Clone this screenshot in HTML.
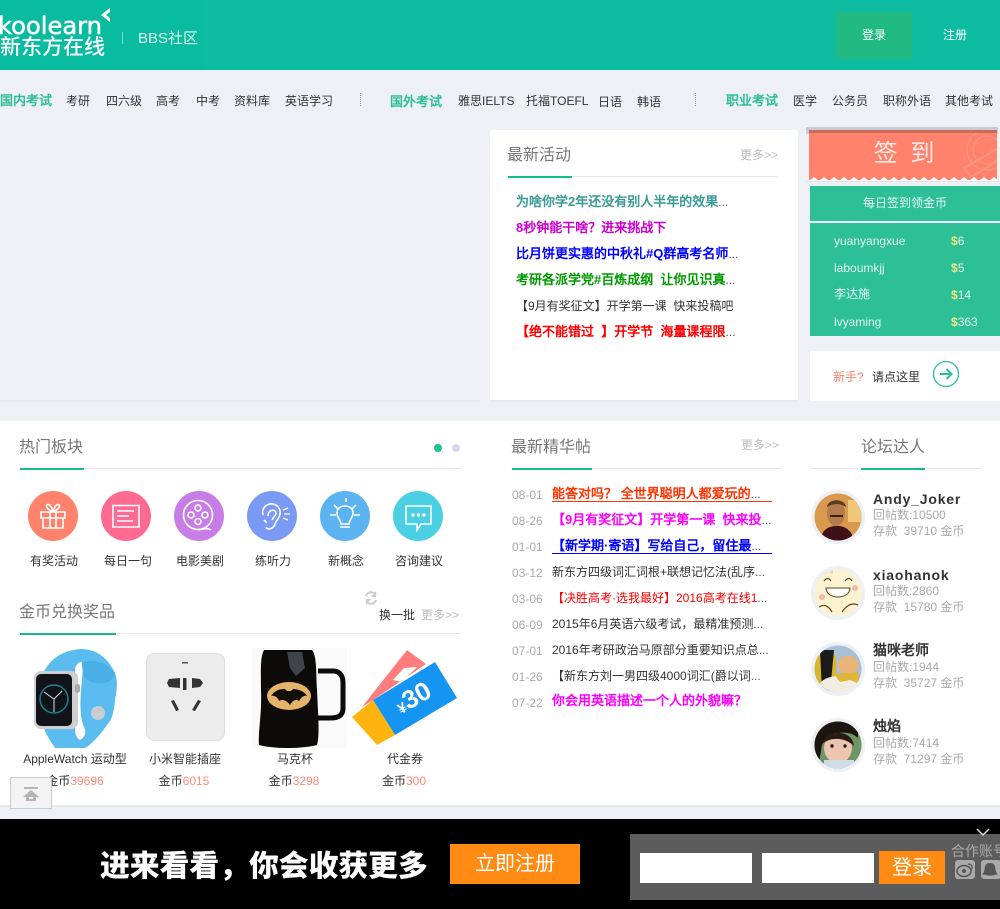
<!DOCTYPE html>
<html><head><meta charset="utf-8"><title>BBS社区</title>
<style>
html,body{margin:0;padding:0}
body{width:1000px;height:909px;overflow:hidden;position:relative;background:#edf0f5;font:12px/20px Arial,"Liberation Sans",sans-serif;color:#333}
.b{position:absolute}
.t{position:absolute;white-space:nowrap;line-height:20px}
.c{text-align:center}
.nh{font-size:13px;font-weight:bold;color:#2dbf96}
.h{font-size:16px;color:#777}
.m{color:#bbb}
.a{font-size:13px;font-weight:bold}
.d{color:#aaa}
.g{color:#aaa}
.n{font-size:14px;font-weight:bold;letter-spacing:.8px;color:#333}
.o{color:#ff8a78}
svg{position:absolute;left:0;top:0}
</style></head><body>
<div class="b" style="left:0;top:0;width:1000px;height:70px;background:#0dbca1"></div>
<div class="b" style="left:0;top:0;width:204px;height:70px;background:#0abc9f"></div>
<div class="t" style="left:-2px;top:12px;font-family:'DejaVu Sans',sans-serif;font-size:24.200px;line-height:28px;color:#fff;-webkit-text-stroke:.5px #fff">koolearn</div>
<div class="t" style="left:0;top:36px;font-size:21px;line-height:21px;color:#fff;font-weight:500;font-family:'Noto Sans CJK SC',sans-serif">新东方在线</div>
<div class="b" style="left:122px;top:32px;width:1px;height:12px;background:#7fdccb"></div>
<div class="t" style="left:138px;top:29px;font-size:15px;color:#d8f5ee">BBS社区</div>
<div class="b" style="left:836px;top:12px;width:76px;height:47px;background:#20ba82"></div>
<div class="t c" style="left:836px;top:25px;width:76px;color:#fff">登录</div>
<div class="t" style="left:943px;top:25px;color:#fff">注册</div>

<div class="t nh" style="left:0;top:91px">国内考试</div>
<div class="t" style="left:66px;top:91px">考研</div>
<div class="t" style="left:106px;top:91px">四六级</div>
<div class="t" style="left:156px;top:91px">高考</div>
<div class="t" style="left:196px;top:91px">中考</div>
<div class="t" style="left:234px;top:91px">资料库</div>
<div class="t" style="left:285px;top:91px">英语学习</div>
<div class="b" style="left:360px;top:93px;height:13px;border-left:1px dotted #999"></div>
<div class="t nh" style="left:390px;top:92px">国外考试</div>
<div class="t" style="left:458px;top:91px">雅思IELTS</div>
<div class="t" style="left:526px;top:91px">托福TOEFL</div>
<div class="t" style="left:598px;top:92px">日语</div>
<div class="t" style="left:637px;top:92px">韩语</div>
<div class="b" style="left:695px;top:93px;height:13px;border-left:1px dotted #999"></div>
<div class="t nh" style="left:726px;top:91px">职业考试</div>
<div class="t" style="left:793px;top:91px">医学</div>
<div class="t" style="left:832px;top:91px">公务员</div>
<div class="t" style="left:883px;top:91px">职称外语</div>
<div class="t" style="left:945px;top:91px">其他考试</div>

<div class="b" style="left:0;top:400px;width:480px;height:2px;background:#e6e9ee"></div>
<div class="b" style="left:490px;top:130px;width:308px;height:270px;background:#fff;border-bottom:2px solid #e6e9ee"></div>
<div class="t h" style="left:507px;top:146px">最新活动</div>
<div class="b" style="left:508px;top:176px;width:270px;height:1px;background:#e8e8e8"></div>
<div class="b" style="left:508px;top:176px;width:64px;height:2px;background:#14bd8c"></div>
<div class="t m" style="left:740px;top:145px">更多&gt;&gt;</div>
<div class="t a" style="left:516px;top:192px;color:#3a9a96">为啥你学2年还没有别人半年的效果<span style="font-weight:normal;color:#555;font-size:12px">...</span></div>
<div class="t a" style="left:516px;top:218px;color:#c0c">8秒钟能干啥？进来挑战下</div>
<div class="t a" style="left:516px;top:244px;color:#00f">比月饼更实惠的中秋礼#Q群高考名师<span style="font-weight:normal;color:#555;font-size:12px">...</span></div>
<div class="t a" style="left:516px;top:270px;color:#090">考研各派学党#百炼成纲&nbsp; 让你见识真<span style="font-weight:normal;color:#555;font-size:12px">...</span></div>
<div class="t" style="left:516px;top:296px;font-size:12px;color:#333">【9月有奖征文】开学第一课&nbsp; 快来投稿吧</div>
<div class="t a" style="left:516px;top:322px;color:#f00">【绝不能错过&nbsp; 】开学节&nbsp; 海量课程限<span style="font-weight:normal;color:#555;font-size:12px">...</span></div>

<svg width="1000" height="909" viewBox="0 0 1000 909" style="z-index:0">
<defs><pattern id="zz" x="809" y="176" width="10" height="5" patternUnits="userSpaceOnUse"><path d="M0 5L5 1L10 5Z" fill="#fff"/></pattern>
<clipPath id="sc"><rect x="809" y="133" width="188" height="44"/></clipPath></defs>
<rect x="806" y="127" width="192" height="7" rx="1" fill="#c5cbd6"/>
<rect x="809" y="130" width="188" height="50" fill="#ff826c"/>
<rect x="809" y="130" width="188" height="3" fill="#cc6b5c"/>
<rect x="809" y="176" width="188" height="5" fill="url(#zz)"/>
<rect x="806" y="181" width="192" height="1" fill="#e2e5ea"/>
<g clip-path="url(#sc)" fill="none" stroke="#ff927e" stroke-width="1.500"><circle cx="987" cy="150" r="20"/><circle cx="987" cy="150" r="14"/><path d="M964 168l33-19 2 11-28 17z" stroke-width="2"/></g>
</svg>
<div class="t c" style="left:809px;top:142px;width:190px;font-size:24px;line-height:20px;color:#ffe9e4;word-spacing:6px"><span style="position:relative;top:2px">签 到</span></div>
<div class="b" style="left:810px;top:186px;width:190px;height:35px;background:#2dbf96"></div>
<div class="t c" style="left:810px;top:193px;width:190px;color:#e6f8f2">每日签到领金币</div>
<div class="b" style="left:810px;top:223px;width:190px;height:113px;background:#2dbf96"></div>
<div class="t" style="left:834px;top:231px;color:#e0f5ee">yuanyangxue</div>
<div class="t" style="left:951px;top:231px;color:#e0f5ee"><span style="color:#f5e97f;font-weight:bold">$</span>6</div>
<div class="t" style="left:834px;top:258px;color:#e0f5ee">laboumkjj</div>
<div class="t" style="left:951px;top:258px;color:#e0f5ee"><span style="color:#f5e97f;font-weight:bold">$</span>5</div>
<div class="t" style="left:834px;top:284px;color:#e0f5ee">李达施</div>
<div class="t" style="left:951px;top:285px;color:#e0f5ee"><span style="color:#f5e97f;font-weight:bold">$</span>14</div>
<div class="t" style="left:834px;top:312px;color:#e0f5ee">lvyaming</div>
<div class="t" style="left:951px;top:312px;color:#e0f5ee"><span style="color:#f5e97f;font-weight:bold">$</span>363</div>
<div class="b" style="left:810px;top:351px;width:190px;height:50px;background:#fff"></div>
<div class="t o" style="left:833px;top:367px;color:#ff826c">新手?</div>
<div class="t" style="left:872px;top:367px">请点这里</div>

<div class="b" style="left:0;top:421px;width:1000px;height:384px;background:#fff;border-bottom:2px solid #e6e9ee"></div>

<div class="t h" style="left:19px;top:438px">热门板块</div>
<div class="b" style="left:20px;top:468px;width:440px;height:1px;background:#e8e8e8"></div>
<div class="b" style="left:20px;top:468px;width:64px;height:2px;background:#14bd8c"></div>
<div class="b" style="left:434px;top:444px;width:8px;height:8px;border-radius:50%;background:#1fc18f"></div>
<div class="b" style="left:452px;top:444px;width:8px;height:8px;border-radius:50%;background:#d5d9e3"></div>

<div class="t c" style="left:14px;top:551px;width:80px">有奖活动</div>
<div class="t c" style="left:88px;top:551px;width:80px">每日一句</div>
<div class="t c" style="left:160px;top:551px;width:80px">电影美剧</div>
<div class="t c" style="left:233px;top:551px;width:80px">练听力</div>
<div class="t c" style="left:306px;top:551px;width:80px">新概念</div>
<div class="t c" style="left:379px;top:551px;width:80px">咨询建议</div>

<div class="t h" style="left:19px;top:603px">金币兑换奖品</div>
<div class="b" style="left:20px;top:633px;width:440px;height:1px;background:#e8e8e8"></div>
<div class="b" style="left:20px;top:633px;width:96px;height:2px;background:#14bd8c"></div>
<div class="t" style="left:379px;top:605px">换一批</div>
<div class="t m" style="left:421px;top:605px">更多&gt;&gt;</div>

<div class="t c" style="left:15px;top:749px;width:120px">AppleWatch 运动型</div>
<div class="t c" style="left:125px;top:749px;width:120px">小米智能插座</div>
<div class="t c" style="left:235px;top:749px;width:120px">马克杯</div>
<div class="t c" style="left:345px;top:749px;width:120px">代金券</div>
<div class="t c" style="left:15px;top:771px;width:120px">金币<span class="o">39696</span></div>
<div class="t c" style="left:124px;top:771px;width:120px">金币<span class="o">6015</span></div>
<div class="t c" style="left:234px;top:771px;width:120px">金币<span class="o">3298</span></div>
<div class="t c" style="left:344px;top:771px;width:120px">金币<span class="o">300</span></div>

<svg width="1000" height="909" viewBox="0 0 1000 909">
<!-- arrow circle -->
<circle cx="946" cy="374" r="12.500" fill="none" stroke="#2dbf96" stroke-width="1.300"/>
<path d="M940 374H951M946.500 369L951.500 374L946.500 379" fill="none" stroke="#2dbf96" stroke-width="2"/>
<!-- category circles -->
<circle cx="53" cy="516" r="25" fill="#ff826c"/><circle cx="126" cy="516" r="25" fill="#ff6a92"/><circle cx="199" cy="516" r="25" fill="#c87de6"/><circle cx="272" cy="516" r="25" fill="#7a9af5"/><circle cx="345" cy="516" r="25" fill="#5cb3f2"/><circle cx="418" cy="516" r="25" fill="#4bcfe2"/>
<g fill="none" stroke="#fff" stroke-width="1.600">
<path d="M41 512H65V518H41ZM43 518V528H63V518M50 512V528M56 512V528"/>
<path d="M53 512C49 510 45 507 47 505C49 503 52 507 53 512C54 507 57 503 59 505C61 507 57 510 53 512"/>
<path d="M113 505.500H139V527H113ZM117 511H134M117 516H129M117 521H133"/>
<circle cx="198" cy="515" r="14.500"/><circle cx="198" cy="508" r="3"/><circle cx="198" cy="521.500" r="3"/><circle cx="191" cy="515" r="3"/><circle cx="205" cy="515" r="3"/>
<path d="M198 529.500C202 530 207 527 211 530"/>
<path d="M266 527C268 531 274 528 275 524C277 519 281 517 280 511C279 505 272 502 267 505C263 507 262 512 263 515M268 516C268 510 275 508 276 513C276 516 273 517 272 520M264 520L267 523"/>
<path d="M283 510L288 508M284 514H290M283 518L288 520" stroke-width="1.300"/>
<path d="M340 527H350M341 524C341 520 337 518 337 513C337 508 341 506 345 506C349 506 353 508 353 513C353 518 349 520 349 524ZM330 515H336M354 515H360M334 505L338 509M356 505L352 509M346 502V498"/>
<path d="M406 506H431V524H421L417 530V524H406Z"/>
</g>
<g fill="#fff"><circle cx="413" cy="515" r="1.700"/><circle cx="418.500" cy="515" r="1.700"/><circle cx="424" cy="515" r="1.700"/></g>
<!-- refresh -->
<path d="M366 596A5.500 5.500 0 0 1 376 595M376 600A5.500 5.500 0 0 1 366 601" fill="none" stroke="#ccc" stroke-width="2"/><path d="M376 591V597H371ZM366 605V599H371Z" fill="#ccc"/>
<!-- watch -->
<path d="M43 673C50 660 60 651 80 649C97 649 108 658 115 673C118 680 117 690 115 700C114 712 112 720 107 725C100 735 92 744 85 748H55C50 740 46 735 44 728Z" fill="#5bbcf0"/>
<path d="M75 668C79 660 83 660 83 668L81 690C80 705 80 718 84 727C87 733 84 738 80 740C76 738 75 733 75 728Z" fill="#fff"/>
<path d="M82 663C95 658 108 663 115 674C112 682 105 685 92 682C84 680 82 672 82 663Z" fill="#49aee6"/>
<circle cx="98" cy="713" r="7" fill="#c9ccd0"/>
<rect x="34" y="671" width="44" height="58" rx="7" fill="#cfcfcf"/>
<rect x="36" y="674" width="36" height="52" rx="5" fill="#101418"/>
<circle cx="54" cy="699" r="14" fill="none" stroke="#1d7f96" stroke-width="1.500"/>
<path d="M54 699L44 692M54 699L62 691M54 699V712" stroke="#ddd" stroke-width="1"/>
<rect x="75" y="684" width="5" height="9" rx="2.500" fill="#aaa"/>
<!-- socket -->
<rect x="146.500" y="653.500" width="78" height="87" rx="8" fill="#ececec" stroke="#dedede"/>
<rect x="182" y="662" width="6" height="1.500" fill="#555"/>
<g fill="#333"><path d="M169 679L180 678V688L169 687L167 683Z"/><path d="M192 678L200 679L203 683L200 687L192 688Z"/><rect x="183" y="678" width="3.500" height="12"/><path d="M171 701L174 700L179 710L176 711ZM198 700L201 701L195 711L192 710Z"/></g>
<!-- mug -->
<rect x="252" y="648" width="95" height="100" fill="#fafafa"/>
<path d="M264 650H312C317 655 316 675 317 690C318 715 320 735 317 745C300 749 275 749 259 745C258 730 262 715 261 690C261 670 260 658 264 650Z" fill="#0d0b0a"/>
<path d="M318 671H333C340 671 343 676 343 683V708C343 716 338 718 330 718H318" fill="none" stroke="#0d0b0a" stroke-width="5"/>
<ellipse cx="289" cy="696" rx="22" ry="14" fill="#e5b36c"/>
<path d="M271 696C275 690 280 689 285 689L287 691H291L293 689C298 689 304 691 307 696C303 695 301 698 299 701C296 699 293 700 290 705C286 700 283 699 279 701C278 698 275 695 271 696Z" fill="#120e0a"/>
<path d="M287 652H302L305 668L296 676L290 668Z" fill="#4c525b" opacity=".8"/>
<!-- coupon -->
<path d="M362 707L407 650L426 664L373 700Z" fill="#ff7d7d"/>
<path d="M393 680L404 668L417 667L402 682Z" fill="#fff"/>
<path d="M373 700L435 662L457 698L395 735Z" fill="#1594f2"/>
<path d="M352 717L373 700L395 735L377 745Z" fill="#ffb30f"/>
<!-- avatars -->
<defs>
<clipPath id="c1"><circle cx="838" cy="517" r="23.500"/></clipPath>
<clipPath id="c2"><circle cx="838" cy="593" r="23.500"/></clipPath>
<clipPath id="c3"><circle cx="838" cy="669" r="23.500"/></clipPath>
<clipPath id="c4"><circle cx="838" cy="745" r="23.500"/></clipPath>
</defs>
<circle cx="838" cy="517" r="27" fill="#edf0f5"/><circle cx="838" cy="593" r="27" fill="#edf0f5"/><circle cx="838" cy="669" r="27" fill="#edf0f5"/><circle cx="838" cy="745" r="27" fill="#edf0f5"/>
<g clip-path="url(#c1)"><rect x="814" y="493" width="48" height="48" fill="#d99a4e"/><rect x="848" y="500" width="14" height="22" fill="#f0c67b"/><path d="M820 541C822 527 832 526 837 526C845 526 852 530 854 541Z" fill="#3e1118"/><ellipse cx="836" cy="513" rx="9" ry="13" fill="#b57a4e"/><path d="M827 507C828 498 845 498 846 507C840 503 833 503 827 507Z" fill="#5a3a22"/><path d="M830 516H843" stroke="#3a2515" stroke-width="2"/></g>
<g clip-path="url(#c2)"><rect x="814" y="569" width="48" height="48" fill="#fdf3d0"/><path d="M826 588H850C850 600 826 600 826 588Z" fill="#fff" stroke="#5b4420"/><path d="M824 581Q828 576 831 581M845 581Q849 576 852 581" fill="none" stroke="#5b4420" stroke-width="1.200"/><circle cx="822" cy="597" r="3" fill="#f7b7b0"/><circle cx="855" cy="588" r="3" fill="#f7b7b0"/><path d="M818 572H834" stroke="#d5d5d5" stroke-width="3" stroke-dasharray="3 3"/><path d="M816 610Q825 600 832 612M842 612Q850 600 860 606" fill="none" stroke="#5b4420" stroke-width="1.200"/></g>
<g clip-path="url(#c3)"><rect x="814" y="645" width="48" height="48" fill="#a7c0d8"/><rect x="814" y="655" width="22" height="30" fill="#d9b62e"/><path d="M820 650H834L830 692H822Z" fill="#1a1a1a"/><ellipse cx="840" cy="685" rx="20" ry="9" fill="#f3ece3"/><ellipse cx="848" cy="665" rx="11" ry="9" fill="#eab47d"/><path d="M834 674L858 672L860 684L850 680L840 682Z" fill="#e0b53a"/></g>
<g clip-path="url(#c4)"><rect x="814" y="721" width="48" height="48" fill="#6e9565"/><path d="M814 721H858V738C850 730 830 730 822 745L818 769H814Z" fill="#1f1510"/><ellipse cx="838" cy="748" rx="14" ry="15" fill="#ecc4b0"/><path d="M822 744C826 730 852 728 854 746C846 738 832 736 822 744Z" fill="#2a1a14"/><rect x="824" y="760" width="30" height="10" fill="#d0dde6"/><circle cx="832" cy="746" r="1.700" fill="#222"/><circle cx="845" cy="746" r="1.700" fill="#222"/></g>
<!-- bottom bar -->
<rect x="0" y="819" width="1000" height="90" fill="#000"/>
<rect x="630" y="834" width="370" height="66" fill="#5c5c5c"/>
<rect x="640" y="853" width="112" height="30" fill="#fff"/><rect x="762" y="853" width="112" height="30" fill="#fff"/>
<path d="M977 829L983 835L989 829" fill="none" stroke="#ddd" stroke-width="1.500"/>
<rect x="955" y="860" width="20" height="19" rx="3" fill="#aaa"/><rect x="981" y="860" width="20" height="19" rx="3" fill="#aaa"/>
<ellipse cx="964" cy="871" rx="7" ry="5.500" fill="none" stroke="#555" stroke-width="1.500"/><circle cx="964" cy="871" r="2" fill="#555"/><path d="M968 864Q973 864 972 869" fill="none" stroke="#555" stroke-width="1.200"/>
<path d="M990 863C985 863 984.500 867 984.500 870L982.500 875L985 874.500C986 876 994 876 995 874.500L997.500 875L995.500 870C995.500 867 995 863 990 863Z" fill="#555"/>
</svg>
<svg width="1000" height="909" viewBox="0 0 1000 909" style="z-index:1"><path d="M110 8L101 15L110 22V18L106 15L110 12Z" fill="#fff"/></svg>
<div class="t" style="left:386px;top:687px;width:56px;text-align:center;font-size:26px;font-weight:bold;color:#fff;transform:rotate(-30deg);z-index:2"><span style="font-size:15px">¥</span>30</div>

<div class="t h" style="left:511px;top:438px">最新精华帖</div>
<div class="b" style="left:512px;top:468px;width:268px;height:1px;background:#e8e8e8"></div>
<div class="b" style="left:512px;top:468px;width:80px;height:2px;background:#14bd8c"></div>
<div class="t m" style="left:741px;top:435px">更多&gt;&gt;</div>
<div class="t d" style="left:512px;top:485px">08-01</div><div class="t a" style="left:552px;top:484px;width:220px;height:17px;line-height:19px;color:#f30;border-bottom:1px solid #f30">能答对吗？ 全世界聪明人都爱玩的<span style="font-weight:normal;color:#555;font-size:12px">...</span></div>
<div class="t d" style="left:512px;top:511px">08-26</div><div class="t a" style="left:552px;top:510px;color:#f0f">【9月有奖征文】开学第一课&nbsp; 快来投<span style="font-weight:normal;color:#555;font-size:12px">...</span></div>
<div class="t d" style="left:512px;top:537px">01-01</div><div class="t a" style="left:552px;top:536px;width:220px;height:17px;line-height:19px;color:#00f;border-bottom:1px solid #00f">【新学期·寄语】写给自己，留住最<span style="font-weight:normal;color:#555;font-size:12px">...</span></div>
<div class="t d" style="left:512px;top:563px">03-12</div><div class="t" style="left:552px;top:562px;color:#333">新东方四级词汇词根+联想记忆法(乱序<span style="color:#555">...</span></div>
<div class="t d" style="left:512px;top:589px">03-06</div><div class="t" style="left:552px;top:588px;color:#f00">【决胜高考·选我最好】2016高考在线1<span style="color:#555">...</span></div>
<div class="t d" style="left:512px;top:615px">06-09</div><div class="t" style="left:552px;top:614px;color:#333">2015年6月英语六级考试，最精准预测<span style="color:#555">...</span></div>
<div class="t d" style="left:512px;top:641px">07-01</div><div class="t" style="left:552px;top:640px;color:#333">2016年考研政治马原部分重要知识点总<span style="color:#555">...</span></div>
<div class="t d" style="left:512px;top:667px">01-26</div><div class="t" style="left:552px;top:666px;color:#333">【新东方刘一男四级4000词汇(爵以词<span style="color:#555">...</span></div>
<div class="t d" style="left:512px;top:693px">07-22</div><div class="t a" style="left:552px;top:691px;color:#f0f">你会用英语描述一个人的外貌嘛？</div>

<div class="t h c" style="left:811px;top:438px;width:164px">论坛达人</div>
<div class="b" style="left:811px;top:468px;width:169px;height:1px;background:#e8e8e8"></div>
<div class="b" style="left:861px;top:468px;width:64px;height:2px;background:#14bd8c"></div>

<div class="t n" style="left:873px;top:489px">Andy_Joker</div><div class="t g" style="left:873px;top:505px">回帖数:10500</div><div class="t g" style="left:873px;top:521px">存款&nbsp; 39710 金币</div>
<div class="t n" style="left:873px;top:565px">xiaohanok</div><div class="t g" style="left:873px;top:581px">回帖数:2860</div><div class="t g" style="left:873px;top:597px">存款&nbsp; 15780 金币</div>
<div class="t n" style="left:873px;top:640px;letter-spacing:0">猫咪老师</div><div class="t g" style="left:873px;top:657px">回帖数:1944</div><div class="t g" style="left:873px;top:673px">存款&nbsp; 35727 金币</div>
<div class="t n" style="left:873px;top:716px;letter-spacing:0">烛焰</div><div class="t g" style="left:873px;top:733px">回帖数:7414</div><div class="t g" style="left:873px;top:749px">存款&nbsp; 71297 金币</div>

<div class="b" style="left:10px;top:777px;width:40px;height:30px;background:#f3f3f3;border:1px solid #ccc"></div>
<svg width="1000" height="909" viewBox="0 0 1000 909" style="z-index:3"><path d="M24 787H38V789H24ZM31 790L39 797H36V801H26V797H23ZM29 797V799H33V797Z" fill="#b5b5b5" fill-rule="evenodd"/></svg>

<div class="t" style="left:100px;top:845px;line-height:36px;font-size:29.800px;font-weight:900;color:#fff;font-family:'Noto Sans CJK SC',sans-serif">进来看看，你会收获更多</div>
<div class="b" style="left:450px;top:844px;width:130px;height:40px;background:#ff8a14"></div>
<div class="t c" style="left:450px;top:844px;width:130px;line-height:40px;font-size:20px;color:#fff">立即注册</div>
<div class="b" style="left:879px;top:851px;width:66px;height:33px;background:#ff8a14"></div>
<div class="t c" style="left:879px;top:851px;width:66px;line-height:35px;font-size:20px;color:#fff">登录</div>
<div class="t" style="left:951px;top:841px;font-size:14px;color:#aaa">合作账号</div>
</body></html>
